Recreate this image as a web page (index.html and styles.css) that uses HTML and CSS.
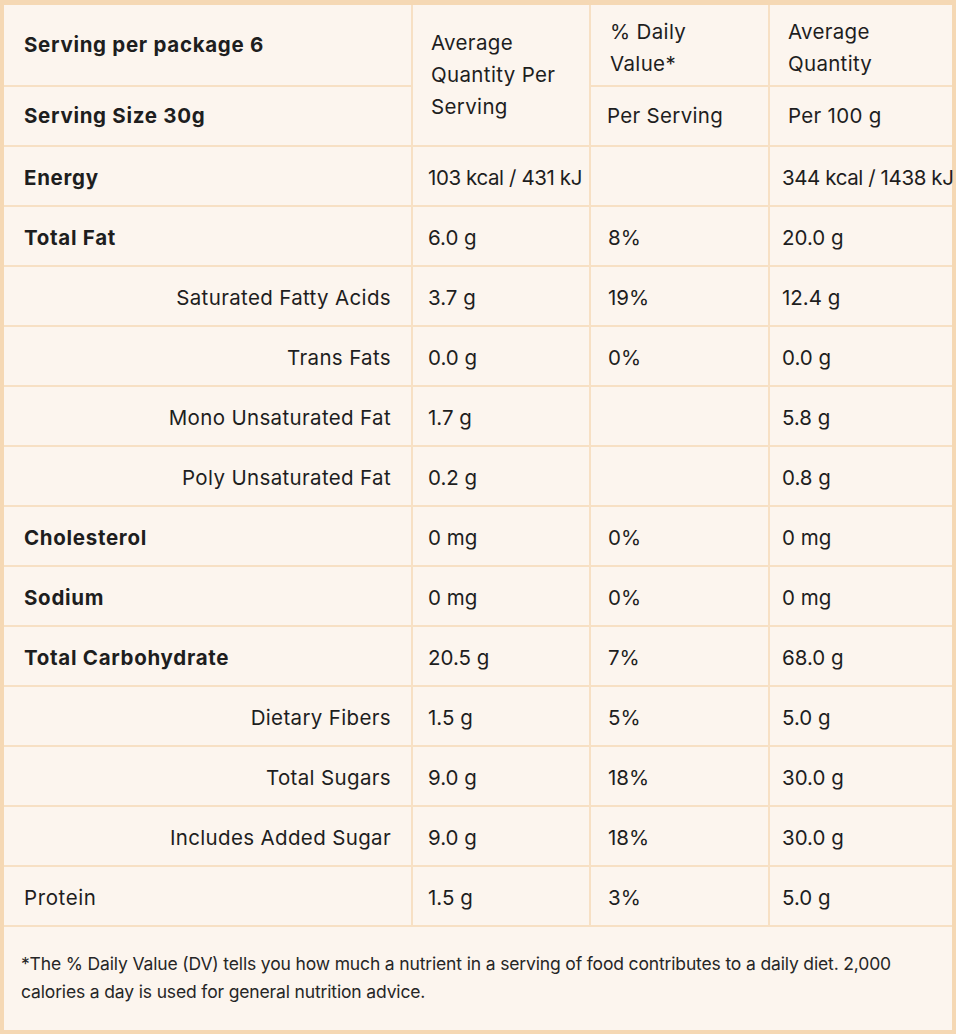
FILE: index.html
```html
<!DOCTYPE html>
<html lang="en">
<head>
<meta charset="utf-8">
<title>Nutrition Information</title>
<link rel="stylesheet" href="styles.css">
</head>
<body>
<div class="panel">
  <table class="facts">
    <colgroup>
      <col class="c1"><col class="c2"><col class="c3"><col class="c4">
    </colgroup>
    <thead>
      <tr class="h1">
        <th class="lbl">Serving per package 6</th>
        <td rowspan="2" class="hq">Average<br>Quantity Per<br>Serving</td>
        <td class="hd">% Daily<br>Value*</td>
        <td class="c4p">Average<br>Quantity</td>
      </tr>
      <tr class="h2">
        <th class="lbl">Serving Size 30g</th>
        <td class="hs">Per Serving</td>
        <td class="c4p">Per 100 g</td>
      </tr>
    </thead>
    <tbody>
      <tr class="energy"><th class="lbl">Energy</th><td>103 kcal / 431 kJ</td><td></td><td>344 kcal / 1438 kJ</td></tr>
      <tr><th class="lbl">Total Fat</th><td>6.0 g</td><td>8%</td><td>20.0 g</td></tr>
      <tr><th class="sub">Saturated Fatty Acids</th><td>3.7 g</td><td>19%</td><td>12.4 g</td></tr>
      <tr><th class="sub">Trans Fats</th><td>0.0 g</td><td>0%</td><td>0.0 g</td></tr>
      <tr><th class="sub">Mono Unsaturated Fat</th><td>1.7 g</td><td></td><td>5.8 g</td></tr>
      <tr><th class="sub">Poly Unsaturated Fat</th><td>0.2 g</td><td></td><td>0.8 g</td></tr>
      <tr><th class="lbl">Cholesterol</th><td>0 mg</td><td>0%</td><td>0 mg</td></tr>
      <tr><th class="lbl">Sodium</th><td>0 mg</td><td>0%</td><td>0 mg</td></tr>
      <tr><th class="lbl">Total Carbohydrate</th><td>20.5 g</td><td>7%</td><td>68.0 g</td></tr>
      <tr><th class="sub">Dietary Fibers</th><td>1.5 g</td><td>5%</td><td>5.0 g</td></tr>
      <tr><th class="sub">Total Sugars</th><td>9.0 g</td><td>18%</td><td>30.0 g</td></tr>
      <tr><th class="sub">Includes Added Sugar</th><td>9.0 g</td><td>18%</td><td>30.0 g</td></tr>
      <tr><th class="plain">Protein</th><td>1.5 g</td><td>3%</td><td>5.0 g</td></tr>
    </tbody>
    <tfoot>
      <tr><td colspan="4" class="note">*The % Daily Value (DV) tells you how much a nutrient in a serving of food contributes to a daily diet. 2,000<br>calories a day is used for general nutrition advice.</td></tr>
    </tfoot>
  </table>
</div>
</body>
</html>
```
FILE: styles.css
```css
html, body {
  margin: 0;
  padding: 0;
  background: #fcf5ee;
}
body {
  font-family: Inter, "Noto Sans", sans-serif;
  color: #1e1e1e;
}
.panel {
  width: 956px;
  height: 1034px;
  box-sizing: border-box;
  border: 4px solid #f5d8b4;
  border-top-width: 5px;
  background: #fcf5ee;
}
.facts {
  width: 100%;
  border-collapse: collapse;
  table-layout: fixed;
  font-size: 20.5px;
  letter-spacing: 0;
}
.c1 { width: 408px; }
.c2 { width: 178px; }
.c3 { width: 179px; }
.c4 { width: 183px; }
.facts th,
.facts td {
  border: 2px solid #f7e0c4;
  padding: 4px 8px 0 15px;
  height: 54px;
  vertical-align: middle;
  text-align: left;
  font-weight: 400;
  line-height: 32px;
  white-space: nowrap;
}
.facts tr:first-child > * { border-top: 0; }
.facts tr > *:first-child { border-left: 0; }
.facts tr > *:last-child { border-right: 0; }
.facts thead th,
.facts thead td { padding-top: 0; height: 58px; }
.facts .h1 > * { height: 80px; }
.facts .h1 .hd,
.facts .h1 .c4p { padding-top: 6px; height: 74px; }
.facts tbody td:nth-child(3) { padding-left: 17px; }
.facts tbody td:nth-child(4) { padding-left: 12px; }
.facts .hq { padding-left: 18px; letter-spacing: 0.35px; }
.facts .hd { padding-left: 19px; letter-spacing: 0.35px; }
.facts .hs { padding-left: 16px; letter-spacing: 0.3px; }
.facts .c4p { padding-left: 18px; letter-spacing: 0.3px; }
.facts .energy td { letter-spacing: -0.4px; }
.facts .lbl {
  font-weight: 700;
  padding-left: 20px;
  letter-spacing: 0.7px;
}
.facts .plain { padding-left: 20px; letter-spacing: 0.6px; }
.facts .sub {
  text-align: right;
  padding-right: 20px;
  letter-spacing: 0.35px;
}
.facts .note {
  font-size: 17.5px;
  line-height: 28px;
  white-space: nowrap;
  padding: 23px 20px 23px 17px;
  height: auto;
  color: #262626;
  letter-spacing: -0.15px;
  border-bottom: 0;
}
```
